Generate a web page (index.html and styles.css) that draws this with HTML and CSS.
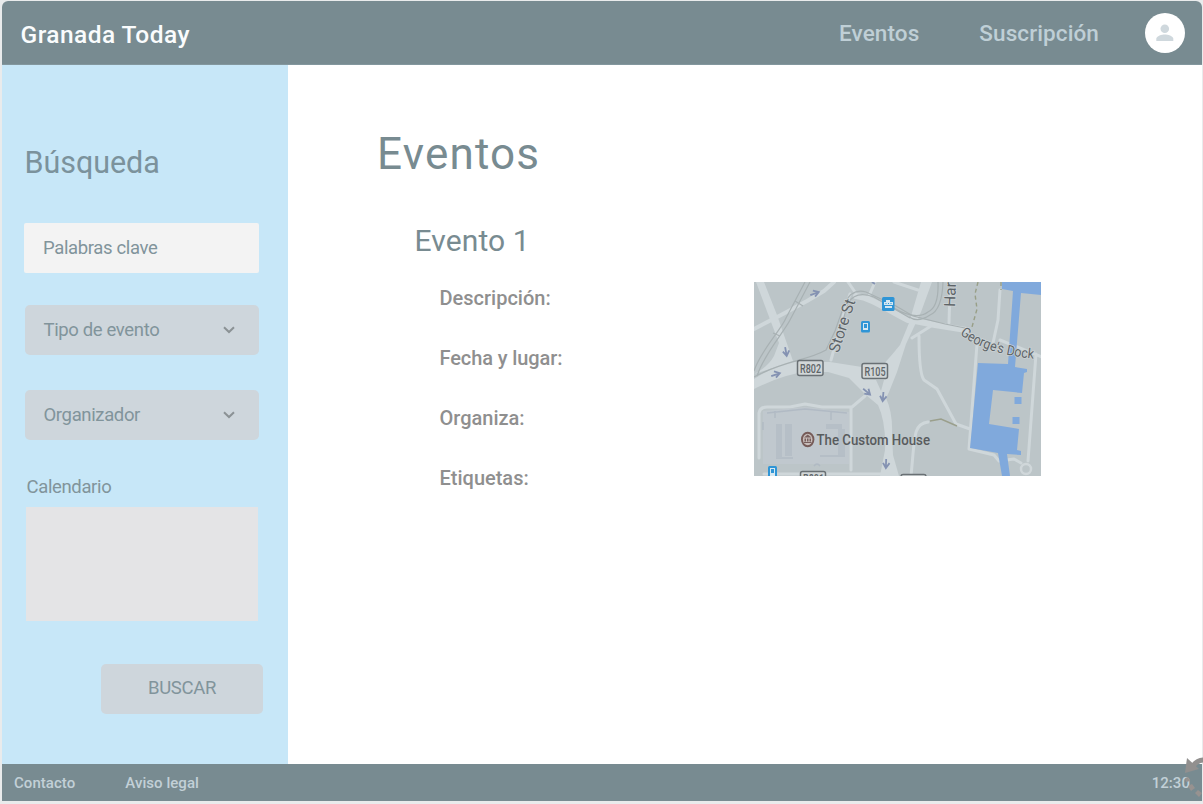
FILE: index.html
```html
<!DOCTYPE html>
<html lang="es">
<head>
<meta charset="utf-8">
<title>Granada Today</title>
<link rel="stylesheet" href="styles.css">
</head>
<body>
<div class="app">
  <header class="topbar">
    <div class="brand">Granada Today</div>
    <nav class="nav"><a>Eventos</a><a>Suscripción</a></nav>
    <div class="avatar">
      <svg width="40" height="40" viewBox="0 0 40 40"><circle cx="19.800" cy="15.700" r="4.300"/><path d="M11.300 28v-2.200c0-2.900 5.700-4.300 8.500-4.300s8.500 1.400 8.500 4.300V28z"/></svg>
    </div>
  </header>
  <div class="body">
    <aside class="sidebar">
      <h2 class="search-title">Búsqueda</h2>
      <div class="field keywords"><span>Palabras clave</span></div>
      <div class="field select type"><span>Tipo de evento</span>
        <svg class="chevron" width="12" height="8" viewBox="0 0 12 8"><path d="M1 1.200l5 4.800 5-4.800"/></svg></div>
      <div class="field select organizer"><span>Organizador</span>
        <svg class="chevron" width="12" height="8" viewBox="0 0 12 8"><path d="M1 1.200l5 4.800 5-4.800"/></svg></div>
      <div class="calendar-label">Calendario</div>
      <div class="calendar"></div>
      <div class="button"><span>BUSCAR</span></div>
    </aside>
    <main class="content">
      <h1 class="title">Eventos</h1>
      <h2 class="event-name">Evento 1</h2>
      <div class="event">
        <div class="details">
          <p>Descripción:</p><p class="date">Fecha y lugar:</p><p>Organiza:</p><p>Etiquetas:</p>
        </div>
        <svg class="map" width="287" height="194" viewBox="754 282 287 194">
          <defs>
            <g id="arrow"><path d="M-5 0H3M-1-3.500L4 0L-1 3" fill="none" stroke="#8492b2" stroke-width="1.800"/></g>
          </defs>
          <rect x="754" y="282" width="288" height="194" fill="#bcc5c8"/>
          <path fill="#cfd7da" d="M754 379Q774 366 792 362L830 362 862 367 882 366Q892 355 900 345L909 323 921 282H932L921 312 906 344 897 372 889 392 886 398Q893 413 892 435L893 455 899 476H880L885 450Q886 422 878 405L866 395 849 378 828 372H806Q784 374 754 389z"/>
          <path fill="#cfd7da" d="M756 282H764L777 315 793 361 782 365 754 374Q768 367 774 356L779 343 771 322z"/>
          <path fill="#bcc5c8" d="M876 380L881 391 884 380z"/>
          <g fill="none" stroke="#cfd7da" stroke-linecap="round" stroke-linejoin="round">
            <path stroke-width="4" d="M752 330L781 315 807 301 824 291 834 282"/>
            <path stroke-width="3" d="M848 282L855 292M875 282L869 296M850 294L846 306 836 342 831 360"/>
            <path stroke-width="6" d="M856 296C872 298 886 309 908 320M910 320L935 325 966 330"/>
            <path stroke-width="3" d="M894 282L918 290M950 290L949 323M1000 290L998 320 993 343M912 338L931 326M919 336C919 360 920 375 924 380L937 389 956 424 970 429M928 422C913 424 915 436 911 476M977 344L969 449 994 455 999 461 1014 459 1021 463M1036 354L1028 461M1000 340L1042 357"/>
            <path stroke-width="3" d="M759 458V413Q760 407 767 407H790L805 404 822 407H852L865 396M851 408V470"/>
            <path stroke-width="3" d="M764 474H890"/>
          </g>
          <circle cx="1026" cy="469" r="5" fill="none" stroke="#d0d7da" stroke-width="2.500"/>
          <path fill="#c0c8ce" d="M763 411L805 407 849 412V464H763z"/>
          <path fill="none" stroke="#adb6c2" stroke-width="1.500" opacity=".8" d="M767 413L805 409 847 413M763 422V430M776 458H793M820 456H845M814 466Q817 462 820 466M831 411V420M775 411V418"/>
          <path fill="#b6bfc7" d="M776 424h6v34h-6zM785 424h7v32h-7zM826 424h16v5h-16zM838 429h7v26h-7z"/>
          <g fill="none" stroke="#a8b1b3" stroke-width="1.200">
            <path d="M754 371C761 350 781 330 786 318L805 282M757 376C764 354 784 332 790 320L810 282M754 377C785 360 807 361 826 350L835 331 845 303Q852 288 866 292L896 306 913 316 945 324 965 328"/>
            <path d="M838 338L848 303Q856 290 874 297L910 318M938 282Q939 307 928 312Q916 321 894 308M943 282Q942 310 930 315Q918 323 909 317M773 333L780 336M795 301L803 306"/>
          </g>
          <path fill="#80a9dc" d="M1002 282H1042V295L1021 293 1015 367 1027 369V372L1024 373 1022 393 993 390 989 424 1019 429 1017 450 1021 451V455L1007 454 1010 476H1002L998 453 970 448 978 363 1008 364 1013 291 1002 289z"/>
          <path fill="#80a9dc" d="M1014.500 397h7v7h-7zM1012.500 417h7v7h-7z"/>
          <path d="M978 282L975 294 977 309 972 327M1001 282V290" fill="none" stroke="#989f87" stroke-width="1.400" stroke-dasharray="4 3"/>
          <path d="M930 421L941 419 957 426" fill="none" stroke="#9a9f8c" stroke-width="1.500"/>
          <use href="#arrow" transform="translate(815 293.500) rotate(-20)"/>
          <use href="#arrow" transform="translate(786 352) rotate(80)"/>
          <use href="#arrow" transform="translate(776 374.500) rotate(-18)"/>
          <use href="#arrow" transform="translate(867 392) rotate(40)"/>
          <use href="#arrow" transform="translate(883 397) rotate(95)"/>
          <use href="#arrow" transform="translate(886 464) rotate(92)"/>
          <path d="M872 282l3 2" stroke="#8795b3" stroke-width="2"/>
          <g fill="#2f95d6"><rect x="882" y="297" width="12.500" height="14" rx="1.500"/><rect x="861" y="321" width="9" height="11.500" rx="1.500"/><rect x="768" y="466" width="9" height="12" rx="1.500"/></g>
          <g fill="#d5e8f2"><path d="M884 302h2v-2h4v2h3v3h-9zM885 306h7v2h-7z"/><path d="M863 323h5v7h-5zM770 468h5v8h-5z"/></g>
          <g fill="#2f95d6"><path d="M885.500 303h1v1h-1zM888 303h1v1h-1zM890.500 303h1v1h-1zM864 324h3v4h-3zM771 469h3v4h-3z"/></g>
          <g fill="#d2d7d8" stroke="#697074" stroke-width="1.500"><rect x="797.500" y="360.500" width="25.500" height="15" rx="2"/><rect x="862" y="363.500" width="25.500" height="15" rx="2"/><rect x="800.500" y="471.500" width="25" height="15" rx="2"/><rect x="901" y="474.500" width="25" height="15" rx="2"/></g>
          <g class="road-code"><text x="800" y="372.500" textLength="21" lengthAdjust="spacingAndGlyphs">R802</text><text x="864.500" y="375.500" textLength="21" lengthAdjust="spacingAndGlyphs">R105</text><text x="803" y="482.500" textLength="21" lengthAdjust="spacingAndGlyphs">R801</text></g>
          <g class="road-name">
            <text transform="translate(838.500 353.500) rotate(-72)" textLength="55">Store St</text>
            <text transform="translate(955 307) rotate(-88)">Har</text>
            <path id="dock" d="M960 334Q983 354 1036 359" fill="none"/>
            <text class="dock"><textPath href="#dock" textLength="79" lengthAdjust="spacingAndGlyphs">George's Dock</textPath></text>
          </g>
          <ellipse cx="807.700" cy="439.500" rx="6.700" ry="7.800" fill="#765b58"/><ellipse cx="807.700" cy="439.500" rx="4.800" ry="5.800" fill="#c9bfbc"/>
          <path d="M804 437.500l3.700-3 3.700 3zM804.500 438.500h1.500v3h-1.500zM807 438.500h1.500v3h-1.500zM809.500 438.500h1.500v3h-1.500zM804 442h7.500v1h-7.500z" fill="#775f5d"/>
          <text class="place" x="816.500" y="445" textLength="113.500" lengthAdjust="spacingAndGlyphs">The Custom House</text>
        </svg>
      </div>
    </main>
  </div>
  <footer class="footer"><a>Contacto</a><a>Aviso legal</a><span class="clock">12:30</span></footer>
</div>
<svg class="sync" width="20" height="48" viewBox="0 0 20 48"><path d="M21 4Q14 4 9 11" fill="none" stroke="#92908f" stroke-width="5"/><path d="M4 2L2 17 16 13z" fill="#92908f"/><path d="M2 22l3-1 2 4-4 1zM5 30l4-2 3 4-4 3zM12 37l3-3 4 3-3 4z" fill="#979290"/></svg>
</body>
</html>
```

FILE: styles.css
```css
* { box-sizing: border-box; }
body { margin: 0; width: 1203px; height: 804px; overflow: hidden; background: #e9ebec; font-family: Roboto, "Liberation Sans", sans-serif; color: #788b91; }
h1, h2, p { margin: 0; font-weight: 400; }
.app { width: 1200px; height: 800px; margin: 1px 1px 0 2px; display: flex; flex-direction: column; background: #fff; border-radius: 6px 6px 0 0; overflow: hidden; }
.topbar { height: 64px; flex: none; display: flex; align-items: center; background: #788b91; padding: 0 17px 0 18.5px; border-bottom: 1px solid #83979e; }
.brand { font-size: 24.5px; font-weight: 500; letter-spacing: .45px; color: #fafcfd; padding-top: 4px; }
.nav { display: flex; margin-left: auto; gap: 60px; font-size: 22.5px; font-weight: 500; letter-spacing: .1px; color: #bfcfd6; padding-top: 1px; margin-right: 46px; }
.avatar { width: 40px; height: 40px; border-radius: 50%; background: #fff; }
.avatar svg { display: block; fill: #cfd8dd; }
.body { display: flex; height: 699px; }
.sidebar { width: 286px; background: #c7e7f8; padding: 78px 25px 0 22px; display: flex; flex-direction: column; font-size: 18.5px; letter-spacing: -.36px; color: #81949b; }
.search-title { font-size: 30.5px; line-height: 40px; letter-spacing: -.05px; padding-left: .5px; color: #7b929c; }
.field { width: 235px; height: 50px; flex: none; border-radius: 2px; background: #f3f3f3; display: flex; align-items: center; justify-content: space-between; padding: 0 25px 0 19px; }
.keywords { margin-top: 40px; }
.select { width: 234px; margin-left: 1px; margin-top: 35px; background: #ced6dc; border-radius: 5px; padding-left: 18.5px; padding-right: 24px; }
.type { margin-top: 32px; }
.chevron { fill: none; stroke: #8b9295; stroke-width: 2; }
.calendar-label { margin: 36px 0 0 2.5px; line-height: 22px; }
.calendar { width: 232px; height: 114px; margin: 9px 0 0 2px; background: #e4e4e6; }
.button { width: 162px; height: 50px; margin: 43px 0 0 77px; padding-bottom: 2px; border-radius: 5px; background: #ced6dc; display: flex; align-items: center; justify-content: center; }
.content { flex: 1; padding: 59px 0 0 89px; }
.title { font-size: 44px; line-height: 60px; letter-spacing: 1.2px; }
.event-name { font-size: 30px; line-height: 40px; margin: 37px 0 0 37.500px; letter-spacing: .1px; }
.event { display: flex; justify-content: space-between; padding: 0 161px 0 62.500px; margin-top: 21px; }
.details { line-height: 30px; display: flex; flex-direction: column; gap: 30px; padding-top: 1px; }
.details p { font-size: 20px; font-weight: 500; color: #8f8f8f; }
.details .date { letter-spacing: -.1px; }
.map { display: block; overflow: hidden; }
.map text { font-family: Roboto, "Liberation Sans", sans-serif; fill: #5d6468; }
.road-code text { font-size: 12px; font-weight: 500; }
.road-name text { font-size: 15.5px; stroke: #cdd3d5; stroke-width: 1.5px; paint-order: stroke; }
.road-name .dock { font-size: 14px; }
.map .place { font-size: 15.5px; font-weight: 500; fill: #585b5d; }
.footer { flex: none; height: 37px; display: flex; align-items: center; background: #788b91; color: #c2d0d7; font-size: 15px; font-weight: 500; letter-spacing: .05px; padding: 1px 12px 0 12px; gap: 50px; }
.clock { margin-left: auto; }
.sync { position: absolute; right: 0; bottom: 0; }
```
